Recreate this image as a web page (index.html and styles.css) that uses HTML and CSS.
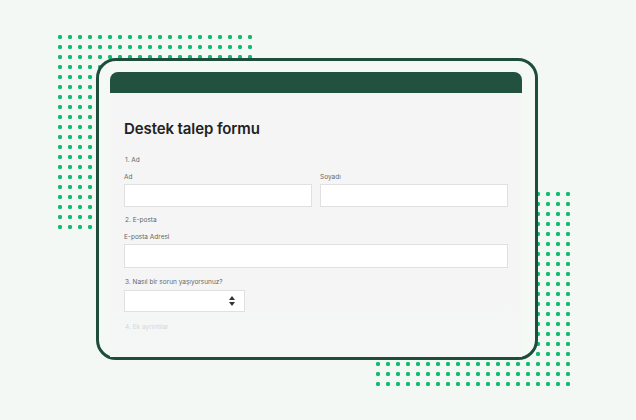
FILE: index.html
```html
<!DOCTYPE html>
<html lang="tr">
<head>
<meta charset="utf-8">
<title>Destek talep formu</title>
<link rel="stylesheet" href="styles.css">
</head>
<body>
<div class="stage">
  <div class="dots dots-tl"></div>
  <div class="dots dots-br"></div>
  <div class="card">
    <div class="panel">
      <div class="panel-head"></div>
      <div class="panel-body">
        <h1 class="title">Destek talep formu</h1>
        <div class="q q1">1. Ad</div>
        <div class="row2">
          <div class="field">
            <div class="lbl">Ad</div>
            <div class="input"></div>
          </div>
          <div class="field">
            <div class="lbl">Soyadı</div>
            <div class="input"></div>
          </div>
        </div>
        <div class="q q2">2. E-posta</div>
        <div class="lbl lbl-email">E-posta Adresi</div>
        <div class="input input-wide"></div>
        <div class="q q3">3. Nasıl bir sorun yaşıyorsunuz?</div>
        <div class="select">
          <svg class="arrows" width="6" height="10" viewBox="0 0 6 10"><polygon points="0,4 3,0 6,4" fill="#333"/><polygon points="0,6 3,10 6,6" fill="#333"/></svg>
        </div>
        <div class="q q4">4. Ek ayrıntılar</div>
      </div>
    </div>
  </div>
</div>
</body>
</html>
```
FILE: styles.css
```css
html, body {
  margin: 0;
  padding: 0;
}
body {
  background: #f3f8f4;
  font-family: "Inter", "Noto Sans", sans-serif;
}
.stage {
  position: relative;
  width: 636px;
  height: 420px;
  overflow: hidden;
  padding-top: 58px;
  box-sizing: border-box;
}
.dots {
  position: absolute;
  width: 200px;
  height: 200px;
  background-image: radial-gradient(circle, #12bd72 1.9px, rgba(18,189,114,0) 2.4px);
  background-size: 10px 10px;
}
.dots-tl {
  left: 55px;
  top: 32px;
}
.dots-br {
  left: 372.5px;
  top: 189px;
}
.card {
  position: relative;
  margin-left: 96px;
  width: 442px;
  height: 302px;
  box-sizing: border-box;
  border: 3px solid #1f4d3b;
  border-radius: 20px;
  background: #f4f9f6;
  padding: 11px 13px 0 11px;
}
.panel {
  height: 100%;
  border-radius: 8px 8px 0 0;
  overflow: hidden;
  display: flex;
  flex-direction: column;
  background: linear-gradient(to bottom, #f5f5f5 0%, #f5f5f5 82%, #f4f8f5 100%);
}
.panel-head {
  height: 21px;
  background: #22523f;
  flex: none;
}
.panel-body {
  padding: 27px 14px 0 14px;
  display: flex;
  flex-direction: column;
  align-items: flex-start;
}
.title {
  margin: 0;
  font-size: 15px;
  line-height: 18px;
  font-weight: 600;
  color: #222;
  letter-spacing: -0.1px;
}
.q, .lbl {
  font-size: 6.5px;
  line-height: 8px;
  color: #666;
}
.q {
  padding-left: 1px;
}
.q1 { margin-top: 18px; }
.row2 {
  margin-top: 9px;
  display: grid;
  grid-template-columns: 188px 188px;
  column-gap: 8px;
}
.field {
  display: flex;
  flex-direction: column;
}
.input {
  margin-top: 3px;
  height: 23px;
  box-sizing: border-box;
  border: 1px solid #e0e0e0;
  background: #fff;
}
.input-wide {
  width: 384px;
  height: 24px;
  margin-top: 3px;
}
.q2 { margin-top: 9px; }
.lbl-email { margin-top: 9px; }
.q3 { margin-top: 10px; }
.select {
  margin-top: 4px;
  width: 121px;
  height: 22px;
  box-sizing: border-box;
  border: 1px solid #e0e0e0;
  background: #fff;
  display: flex;
  align-items: center;
  justify-content: flex-end;
  padding-right: 9px;
}
.arrows { display: block; }
.q4 {
  margin-top: 11px;
  color: #d6d6d6;
}
```
